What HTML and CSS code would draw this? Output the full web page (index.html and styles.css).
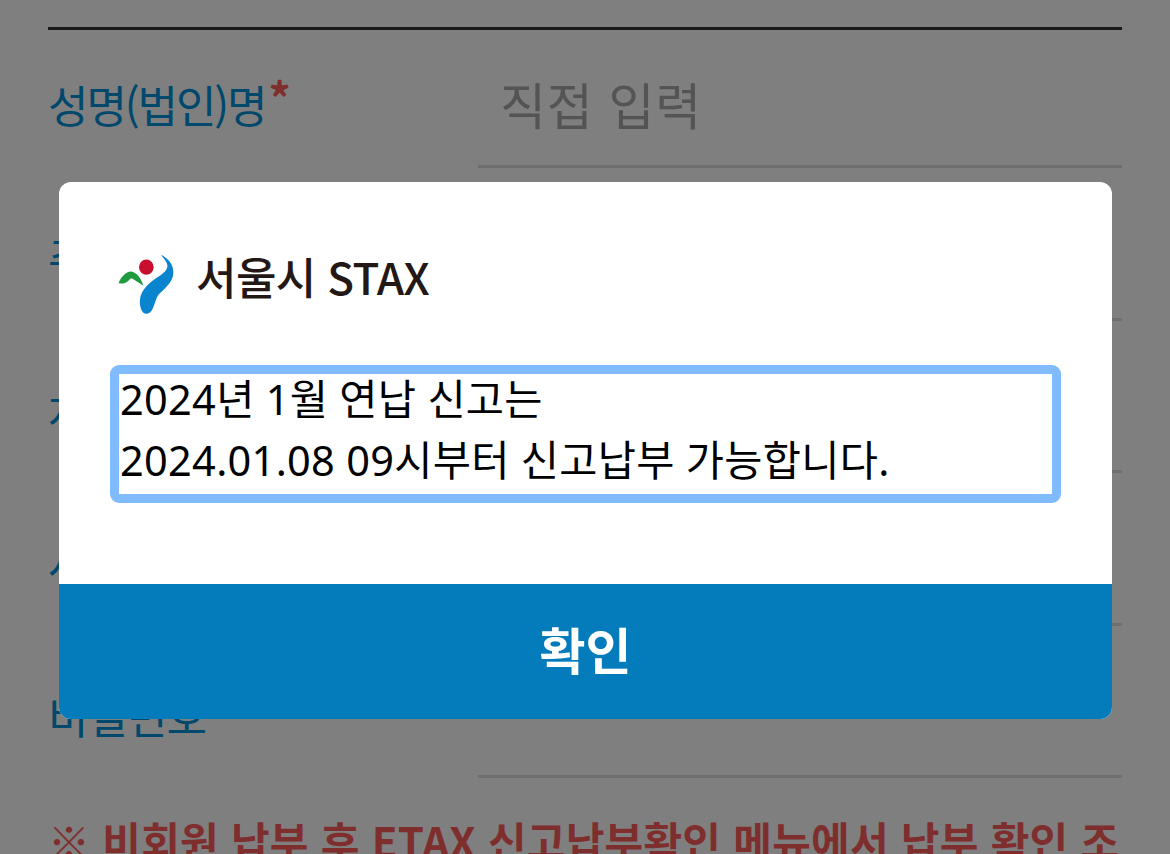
FILE: index.html
```html
<!DOCTYPE html>
<html lang="ko">
<head>
<meta charset="utf-8">
<title>서울시 STAX</title>
<link rel="stylesheet" href="styles.css">
</head>
<body>
<main class="page">
  <form class="form">
    <div class="row"><div class="label">성명(법인)명<span class="req">*</span></div><div class="field placeholder">직접 입력</div></div>
    <div class="row"><div class="label">주민등록번호</div><div class="field"></div></div>
    <div class="row"><div class="label">차량번호</div><div class="field"></div></div>
    <div class="row"><div class="label">사업자번호</div><div class="field"></div></div>
    <div class="row"><div class="label">비밀번호</div><div class="field"></div></div>
  </form>
  <p class="notice">※ 비회원 납부 후 ETAX 신고납부확인 메뉴에서 납부 확인 조회가 가능합니다</p>
</main>
<div class="overlay"></div>
<section class="modal">
  <div class="modal-body">
    <div class="brand">
      <svg class="logo" viewBox="50 40 180 185" aria-hidden="true">
        <ellipse cx="141" cy="82" rx="22" ry="23" fill="#c8102e"/>
        <path d="M58 130C62 115 80 95 95 95C112 97 125 115 132 137C120 130 105 118 95 115C85 125 75 135 58 130Z" fill="#1f9a3f"/>
        <path d="M185 45C205 55 222 72 222 97C222 125 200 142 180 162C165 178 165 222 142 222C125 222 120 195 122 178C125 150 150 128 178 110C198 98 208 85 203 72C199 62 192 54 185 45Z" fill="#0a84cf"/>
      </svg>
      <span class="brand-name">서울시 STAX</span>
    </div>
    <div class="message" tabindex="-1">2024년 1월 연납 신고는<br>2024.01.08 09시부터 신고납부 가능합니다.</div>
  </div>
  <button class="confirm" type="button">확인</button>
</section>
</body>
</html>
```
FILE: styles.css
```css
* { box-sizing: border-box; }
html, body { margin: 0; height: 100%; }
body {
  background: #fff;
  overflow: hidden;
  font-family: "Noto Sans CJK KR", "Noto Sans", sans-serif;
  position: relative;
}
.page { padding: 27px 48px 0; }
.form { border-top: 3px solid #333; }
.row { display: flex; height: 152.5px; }
.row:first-child { height: 138px; }
.label {
  width: 430px;
  padding-top: 42px;
  font-size: 44px;
  line-height: 64px;
  letter-spacing: -2.1px;
  color: #0090d8;
  white-space: nowrap;
}
.row + .row .label { padding-top: 57px; letter-spacing: -1px; }
.req {
  color: #ff5c5c;
  font-size: 44px;
  font-weight: 700;
  vertical-align: 8px;
  margin-left: 3px;
  line-height: 0;
}
.field {
  flex: 1;
  border-bottom: 3px solid #ddd;
}
.placeholder {
  padding: 37px 0 0 22px;
  font-size: 50px;
  line-height: 72px;
  letter-spacing: .8px;
  color: #a8a8a8;
  height: 138px;
}
.notice {
  margin: 32px 0 0;
  font-size: 42px;
  font-weight: 700;
  line-height: 60px;
  color: #ff5c5c;
  word-break: break-all;
  letter-spacing: .25px;
}
.overlay {
  position: absolute;
  inset: 0;
  background: rgba(0, 0, 0, .5);
}
.modal {
  position: absolute;
  left: 59px;
  top: 182px;
  width: 1053px;
  height: 537px;
  background: #fff;
  border-radius: 12px;
  overflow: hidden;
  display: flex;
  flex-direction: column;
}
.modal-body { flex: 1; padding: 60px 51px 0; }
.brand { display: flex; align-items: center; height: 68px; padding-left: 8px; gap: 20px; }
.logo { width: 60px; height: 62px; flex: none; margin-top: 16px; margin-left: -2px; }
.brand-name {
  font-size: 44px;
  font-weight: 500;
  line-height: 60px;
  letter-spacing: -.6px;
  color: #231815;
}
.message {
  margin-top: 55px;
  width: 951px;
  height: 138px;
  padding: 4px 0 0 10px;
  outline: 9px solid #80bbff;
  outline-offset: -9px;
  border-radius: 9px;
  font-family: "Noto Sans", "Noto Sans CJK KR", sans-serif;
  font-size: 41.5px;
  font-weight: 400;
  line-height: 61px;
  letter-spacing: .3px;
  color: #000;
  white-space: nowrap;
}
.confirm {
  height: 135px;
  border: 0;
  background: #047bbb;
  color: #fff;
  font-family: "Noto Sans CJK KR", sans-serif;
  font-size: 50px;
  font-weight: 700;
  padding: 0 0 8px;
  cursor: pointer;
}
```
